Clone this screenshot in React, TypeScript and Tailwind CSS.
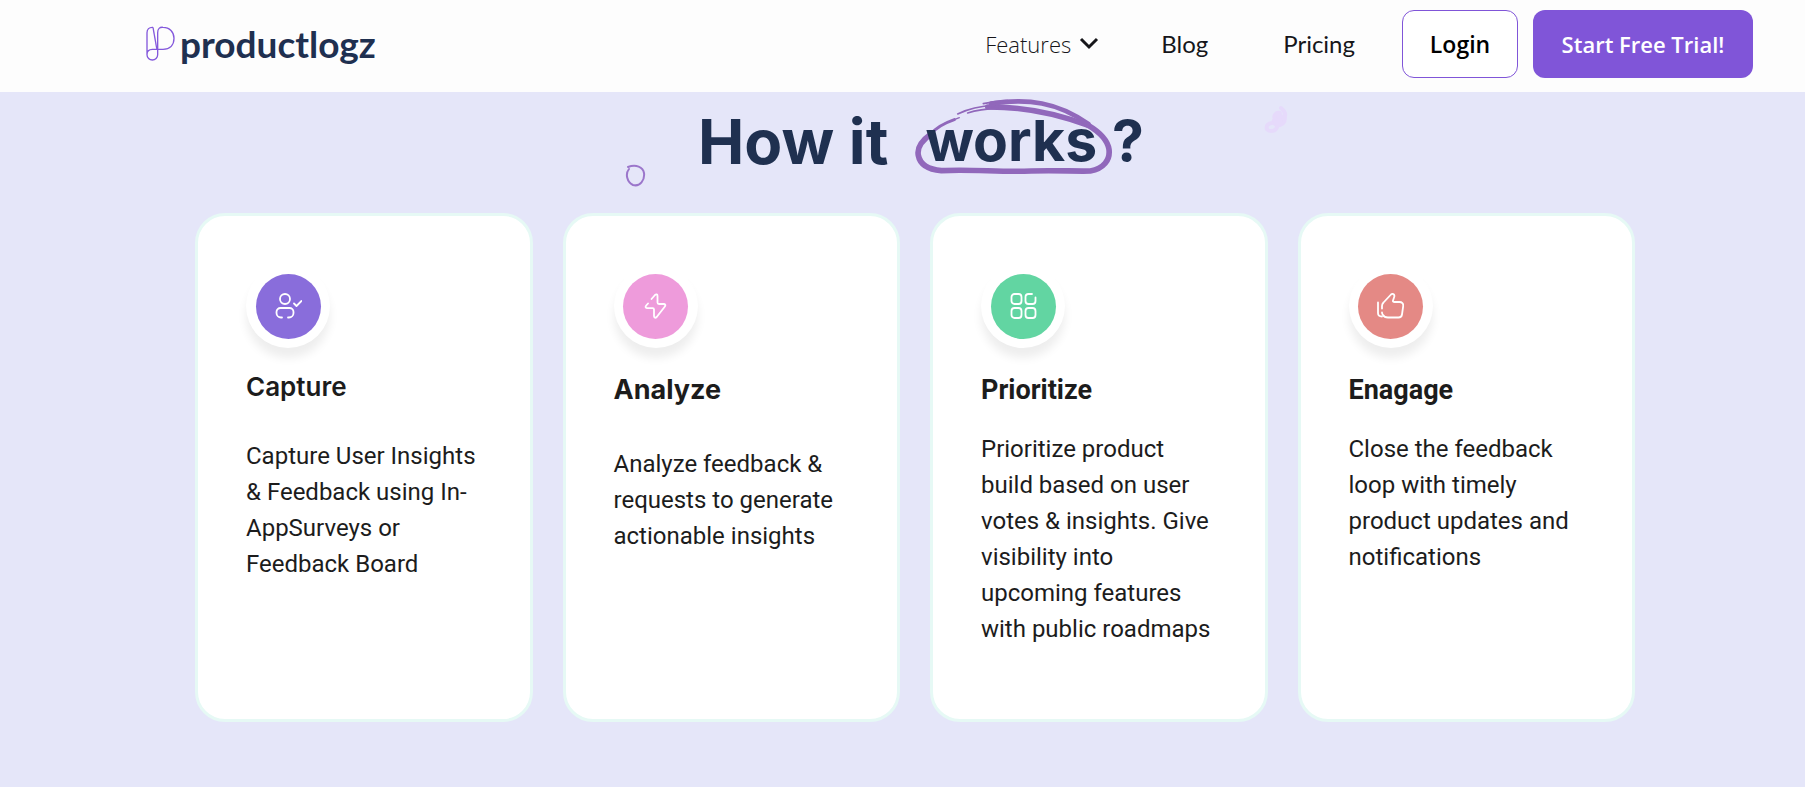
import type { ReactNode } from "react";

const CaptureIcon = () => (
  <>
    <circle cx="10" cy="6" r="5" />
    <path d="M7 24.500h-1a4.500 4.500 0 0 1-4.500-4.500v-1a4 4 0 0 1 4-4h9a4 4 0 0 1 4 4v1a4.500 4.500 0 0 1-4.500 4.500h-1" />
    <path d="M19 10.500l2.500 2.500 5-5" />
  </>
);

const AnalyzeIcon = () => (
  <path d="M9.500 6l3.500-4c1.200-1.200 2.500-.8 2.500 1v6.500c0 1 .3 1.500 1.500 1.500h4.500c2 0 2.300 1.400 1.200 2.800l-8 10.200c-1.300 1.300-2.700.8-2.700-1v-6.500c0-.8-.4-1.300-1.300-1.300h-5.200c-1.900 0-2.400-1.400-1.300-2.700l1.800-2" />
);

const PrioritizeIcon = () => (
  <>
    <rect x="1.500" y="1" width="10" height="10" rx="3" />
    <rect x="1.500" y="15" width="10" height="10" rx="3" />
    <rect x="15.500" y="15" width="10" height="10" rx="3" />
    <path d="M22 1h-3.500a3 3 0 0 0-3 3v4a3 3 0 0 0 3 3h4a3 3 0 0 0 3-3v-3.500" />
  </>
);

const EngageIcon = () => (
  <>
    <path d="M1 9.500v10.500c0 2.500 1 3.500 4 3.500" />
    <path d="M5 15.500v-2.500c0-1.500.5-2.500 1.500-3.500l7.500-8c2-1.500 4 .2 3.200 2.500l-1.200 3.500c-.3 1 .3 1.500 1.500 1.500h5c2.500 0 4 1.600 3.700 4l-1.200 8.500c-.3 2-1.500 3-3.500 3h-10.500c-2 0-4-.4-5-2.500-.8-1-1-1.500-1-2.500" />
  </>
);

type Step = {
  title: string;
  desc: string;
  color: string;
  titleClass: string;
  descClass: string;
  icon: ReactNode;
};

const steps: Step[] = [
  {
    title: "Capture",
    desc: "Capture User Insights & Feedback using In-AppSurveys or Feedback Board",
    color: "bg-[#896ddb]",
    titleClass: "mt-[23px] font-['Inter',sans-serif] text-[26px] font-semibold",
    descClass: "mt-[35px]",
    icon: <CaptureIcon />,
  },
  {
    title: "Analyze",
    desc: "Analyze feedback & requests to generate actionable insights",
    color: "bg-[#ee9bdb]",
    titleClass: "mt-[26px] font-['Inter',sans-serif] text-[27px] font-bold",
    descClass: "mt-10",
    icon: <AnalyzeIcon />,
  },
  {
    title: "Prioritize",
    desc: "Prioritize product build based on user votes & insights. Give visibility into upcoming features with public roadmaps",
    color: "bg-[#62d5a2]",
    titleClass: "mt-[26px] text-[27px] font-bold",
    descClass: "mt-[25px]",
    icon: <PrioritizeIcon />,
  },
  {
    title: "Enagage",
    desc: "Close the feedback loop with timely product updates and notifications",
    color: "bg-[#e48985]",
    titleClass: "mt-[26px] text-[27px] font-bold",
    descClass: "mt-[25px]",
    icon: <EngageIcon />,
  },
];

const Logo = () => (
  <a href="#home" className="flex items-center gap-[5px]">
    <svg
      width="30"
      height="36"
      viewBox="0 0 90 108"
      fill="none"
      stroke="#8459dc"
      strokeWidth="4"
      aria-hidden="true"
    >
      <path d="M24 4C12 3 6 10 6 20V86A16 16 0 0 0 38 86V20C38 8 44 3 54 4C74 4 87 18 87 37C87 58 74 70 54 70H22C12 70 6 76 6 86" />
      <path d="M24 4L36 72" />
    </svg>
    <span className="font-['Lato',sans-serif] text-[37px] leading-[48px] font-bold text-[#1f3050]">
      productlogz
    </span>
  </a>
);

const Header = () => (
  <header className="flex h-[92px] items-center justify-between bg-[#fdfdfd] pb-1 pl-[145px] pr-[52px] text-[#16161a]">
    <Logo />
    <nav className="flex items-center font-['Open_Sans',sans-serif]">
      <button className="mr-[62px] flex items-center gap-2 text-[22px] font-light">
        Features
        <svg
          width="20"
          height="14"
          viewBox="0 0 20 14"
          fill="none"
          stroke="currentColor"
          strokeWidth="3"
          aria-hidden="true"
        >
          <path d="M2 2l8 8 8-8" />
        </svg>
      </button>
      <a href="#blog" className="mr-[75px] font-['Lato',sans-serif] text-2xl">
        Blog
      </a>
      <a href="#pricing" className="mr-[47px] font-['Lato',sans-serif] text-2xl">
        Pricing
      </a>
      <button className="mr-[15px] h-[68px] w-[116px] rounded-xl border border-[#8055d8] bg-white text-[23px] font-semibold text-black">
        Login
      </button>
      <button className="h-[68px] w-[220px] rounded-xl bg-[#8055d8] text-[22px] font-semibold text-white">
        Start Free Trial!
      </button>
    </nav>
  </header>
);

const Title = () => (
  <div className="flex h-[121px] justify-center pl-[108px]">
    <svg
      className="mt-[72px] mr-[52px]"
      width="21"
      height="23"
      viewBox="0 0 21 23"
      fill="none"
      stroke="#9b76cb"
      strokeWidth="2"
      strokeLinecap="round"
      aria-hidden="true"
    >
      <path d="M4 5C0 10 2 18 8 21C15 23 20 16 19 9C18 3 11 0 3 3" />
    </svg>
    <h2 className="mt-3 flex h-[74px] items-center font-['Inter',sans-serif] text-[62px] font-bold text-[#1f3050]">
      How it
      <span className="relative ml-[37px] text-[57px]">
        <svg
          className="absolute -left-3 top-0"
          width="200"
          height="77"
          viewBox="66 30 600 231"
          fill="none"
          stroke="#9168bb"
          strokeLinecap="round"
          strokeLinejoin="round"
          aria-hidden="true"
        >
          <path
            strokeWidth="17"
            d="M120 138C92 158 78 182 82 202C87 229 110 244 151 248C240 243 330 253 420 249C490 247 550 250 598 249C638 242 658 216 654 184C650 158 632 136 592 112"
          />
          <path strokeWidth="9" d="M118 140C132 122 158 106 190 95" />
          <path strokeWidth="4" d="M160 107L205 89" />
          <path strokeWidth="16" d="M290 57C400 56 500 78 590 112" />
          <path strokeWidth="14" d="M300 47C410 30 500 42 592 108" />
          <path
            strokeWidth="5"
            d="M200 78C232 62 262 54 310 52M230 75C260 65 290 62 320 61M277 47C300 42 325 39 350 38"
          />
        </svg>
        <span className="relative">works</span>
      </span>
      <span className="ml-[15px] text-[57px]">?</span>
    </h2>
    <svg
      className="mt-3 ml-[120px]"
      width="24"
      height="30"
      viewBox="0 0 24 30"
      fill="none"
      stroke="#e6dafb"
      strokeWidth="4"
      strokeLinecap="round"
      aria-hidden="true"
    >
      <path
        fill="#e6dafb"
        d="M20 12C22 16 20 20 16 21C11 22 8 18 11 15C9 12 12 8 16 9"
      />
      <path d="M17 4C21 7 22 11 20 15M8 19C1 20 1 27 7 27C12 27 14 23 13 20" />
    </svg>
  </div>
);

const App = () => {
  return (
    <div className="min-h-screen bg-white">
      <Header />
      <section className="bg-[#e5e6f9] pb-[65px]" id="how-it-works">
        <Title />
        <div className="ml-[195px] mr-[170px] grid grid-cols-4 gap-[30px] font-['Roboto',sans-serif] text-[#1c1c1c]">
          {steps.map((step) => (
            <article
              key={step.title}
              className="min-h-[509px] rounded-[30px] border-3 border-[#e6f9f5] bg-white p-12"
            >
              <div className="flex size-21 items-center justify-center rounded-full bg-white shadow-[0_10px_10px_rgba(0,0,0,0.07)]">
                <div
                  className={`flex size-[65px] items-center justify-center rounded-full ${step.color}`}
                >
                  <svg
                    width="27"
                    height="26"
                    viewBox="0 0 27 26"
                    fill="none"
                    stroke="white"
                    strokeWidth="1.8"
                    strokeLinecap="round"
                    strokeLinejoin="round"
                    aria-hidden="true"
                  >
                    {step.icon}
                  </svg>
                </div>
              </div>
              <h3 className={`leading-8 ${step.titleClass}`}>{step.title}</h3>
              <p className={`text-2xl leading-9 ${step.descClass}`}>
                {step.desc}
              </p>
            </article>
          ))}
        </div>
      </section>
    </div>
  );
};

export default App;
